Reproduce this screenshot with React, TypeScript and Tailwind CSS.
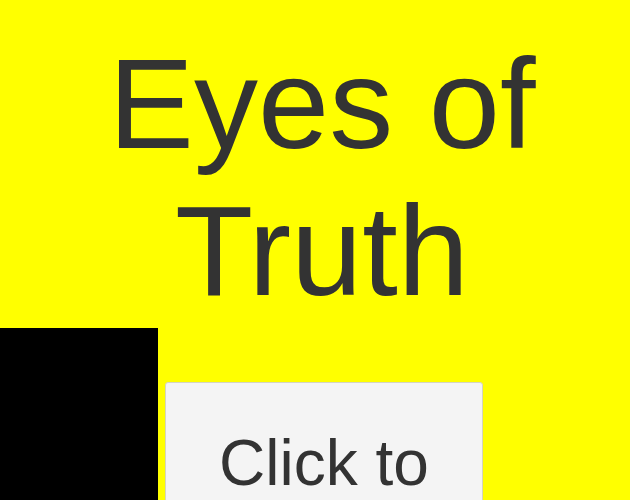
export default function App() {
  return (
    <div className="w-[630px] h-[500px] overflow-hidden bg-[#ffff00]" style={{ fontFamily: '"Liberation Sans", Arial, sans-serif' }}>
      <h1 className="pt-[30px] pl-[14px] text-center text-[128px] leading-[147px] text-[#333333] font-normal">
        Eyes of Truth
      </h1>
      <div className="flex items-start mt-[4px]">
        <div className="w-[158px] h-[300px] bg-black shrink-0" />
        <button className="ml-[7px] mt-[54px] w-[318px] shrink-0 bg-[#f4f4f4] border border-[#d4d4c0] rounded-[3px] pt-[44px] pb-[44px] text-[64px] leading-[73px] text-[#333333] text-center" style={{ fontFamily: '"Liberation Sans", Arial, sans-serif' }}>
          Click to see
        </button>
      </div>
    </div>
  );
}
